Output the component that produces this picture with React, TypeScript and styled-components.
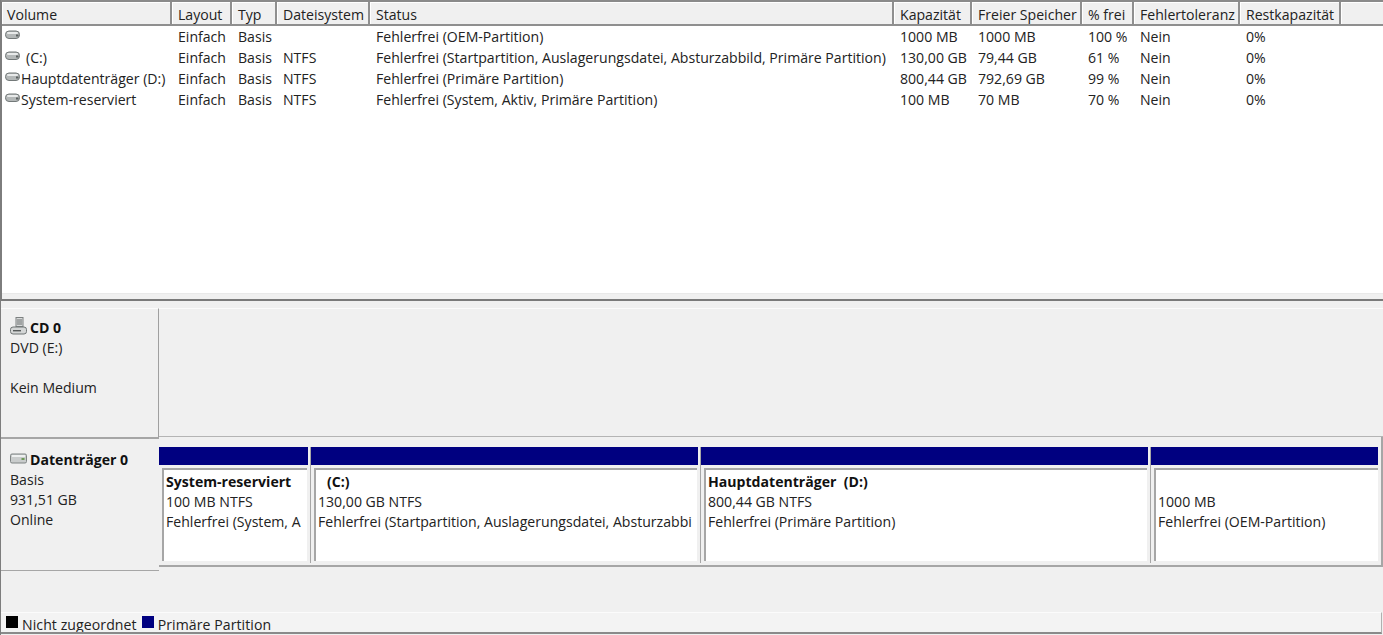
import React from "react";
import styled, { createGlobalStyle } from "styled-components";

const Global = createGlobalStyle`
  html, body { margin: 0; padding: 0; background: #f0f0f0; }
  body { font-family: "Open Sans", "Noto Sans", sans-serif; font-size: 14.1px; color: #222; }
`;

const COLS = "170px 60px 45px 93px 524px 78px 110px 52px 106px 101px 1fr";

const Page = styled.div`
  width: 1383px; height: 635px; overflow: hidden;
  display: flex; flex-direction: column;
  background: #f0f0f0;
  border-left: 1px solid #7d7d7d;
  box-sizing: border-box;
`;
const ListPane = styled.div`
  height: 301px; flex: none; background: #fff;
  margin-left: -1px; border-left: 2px solid #7d7d7d;
  border-top: 2px solid #8a8a8a; border-bottom: 2px solid #7a7a7a;
  box-sizing: border-box;
  display: flex; flex-direction: column;
`;
const HeaderRow = styled.div`
  display: grid; grid-template-columns: ${COLS}; height: 24px; flex: none;
  background: #f0f0f0; border-bottom: 2px solid #8f8f8f; box-sizing: border-box;
`;
const HeaderCell = styled.div<{ $last?: boolean }>`
  padding-left: 6px; line-height: 25px; white-space: nowrap; overflow: hidden;
  border-right: ${(p) => (p.$last ? "none" : "2px solid #8f8f8f")};
  box-shadow: inset 1px 1px 0 #fff;
  &:first-child { padding-left: 5px; }
`;
const Rows = styled.div`
  flex: 1;
`;
const Row = styled.div`
  display: grid; grid-template-columns: ${COLS}; height: 21px; line-height: 21px;
`;
const Cell = styled.div`
  padding-left: 6px; white-space: nowrap;
`;
const VolumeCell = styled(Cell)`
  padding-left: 1px; display: flex; align-items: flex-start;
  svg { margin-top: 4px; flex: none; }
`;
const VolumeName = styled.span<{ $shift: number }>`
  margin-left: ${(p) => p.$shift}px;
`;
const ListFoot = styled.div`
  height: 6px; flex: none; background: #f0f0f0; border-top: 1px solid #e9e9e9; box-sizing: border-box;
`;
const DiskArea = styled.div`
  flex: 1; display: flex; flex-direction: column; padding-top: 7px;
  margin-left: -1px;
`;
const DiskRow = styled.div<{ $h: number }>`
  height: ${(p) => p.$h}px; flex: none; display: flex;
`;
const DiskLabel = styled.div`
  width: 159px; flex: none; box-sizing: border-box; padding: 9px 0 0 10px;
  border-right: 1px solid #a0a0a0; line-height: 20px;
  border-top: 1px solid #fbfbfb;
`;
const DiskLabelSecond = styled(DiskLabel)`
  border-right: none; border-top: 2px solid #a6a6a6; padding-top: 11px;
  border-bottom: 1px solid #a6a6a6; height: 134px;
`;
const LabelTitle = styled.div`
  display: flex; align-items: flex-end; font-weight: 700; color: #111; height: 20px;
`;
const TitleIcon = styled.svg`
  flex: none; margin: 0 3px 6px 0;
`;
const CdTitleIcon = styled(TitleIcon)`
  margin-bottom: 3px;
`;
const EmptyArea = styled.div`
  flex: 1; border-top: 1px solid #fbfbfb; border-bottom: 1px solid #b4b4b4;
`;
const PartitionArea = styled.div`
  flex: none; width: 1224px; display: flex; padding: 10px 3px 2px 0; height: 130px; box-sizing: border-box;
  border-bottom: 2px solid #a6a6a6; border-right: 2px solid #a6a6a6;
`;
const Partition = styled.div<{ $w: number }>`
  width: ${(p) => p.$w}px; flex: none; padding-right: 1px; border-right: 1px solid #a6a6a6;
  display: flex; flex-direction: column;
  &:last-child { border-right: none; padding-right: 0; flex: 1; width: auto; }
`;
const Bar = styled.div`
  height: 18px; background: #000080; flex: none; margin-right: 1px;
  ${Partition}:last-child & { margin-right: 0; }
`;
const PartBox = styled.div`
  margin: 3px 2px 0 3px; height: 93px; box-sizing: border-box;
  background: #fff; border-left: 2px solid #a6a6a6; border-top: 2px solid #a6a6a6;
  padding: 2px 0 0 2px; line-height: 20px; overflow: hidden; white-space: nowrap;
  ${Partition}:last-child & { margin-right: 0; }
`;
const PartTitle = styled.div<{ $indent: number }>`
  font-weight: 700; color: #111; height: 20px; padding-left: ${(p) => p.$indent}px; white-space: pre;
`;
const Spacer = styled.div` flex: 1; `;
const Legend = styled.div`
  height: 19px; flex: none; display: flex; align-items: flex-start; padding-left: 6px;
  background: #f3f3f3; border-top: 1px solid #fbfbfb; border-bottom: 2px solid #8a8a8a;
  border-right: 1px solid #b0b0b0;
  margin: 0 1px 1px 0; line-height: 23px; overflow: hidden;
`;
const Swatch = styled.span<{ $c: string }>`
  width: 12px; height: 12px; background: ${(p) => p.$c}; margin: 3px 4px 0 0; flex: none;
`;
const LegendText = styled.span`
  margin-right: 5px; white-space: nowrap; letter-spacing: 0.07px;
`;

const Drive = () => (
  <svg width="17" height="10" viewBox="0 0 17 10">
    <rect x="2.5" y="1" width="14" height="7.5" rx="3.5" fill="#b4b8b8" stroke="#737979" />
    <rect x="4" y="2" width="11" height="2" rx="1" fill="#e8eaea" />
    <rect x="13" y="4.5" width="2.5" height="2" fill="#5b6060" />
  </svg>
);
const DiskIcon = () => (
  <TitleIcon width="17" height="12" viewBox="0 0 17 12">
    <rect x="0.5" y="2" width="16" height="9" rx="1.5" fill="#c9cccc" stroke="#7f8484" />
    <rect x="2" y="3" width="13" height="2" fill="#eef0f0" />
    <rect x="11.5" y="6" width="3" height="2" fill="#6e9a58" />
  </TitleIcon>
);
const CdIcon = () => (
  <CdTitleIcon width="17" height="18" viewBox="0 0 17 18">
    <rect x="6" y="0.5" width="7" height="9" fill="#d8dada" stroke="#7c8080" />
    <path d="M7 3h5M7 5h5M7 7h5" stroke="#6a6e6e" strokeWidth="1" />
    <rect x="0.5" y="10" width="16" height="7" rx="2.5" fill="#d4d6d6" stroke="#6f7474" />
    <rect x="3" y="13" width="8" height="1.4" fill="#565a5a" />
  </CdTitleIcon>
);

const HEAD = ["Volume","Layout","Typ","Dateisystem","Status","Kapazität","Freier Speicher","% frei","Fehlertoleranz","Restkapazität"];
const DATA = [
  { n: "", s: 0, fs: "", st: "Fehlerfrei (OEM-Partition)", k: "1000 MB", f: "1000 MB", p: "100 %" },
  { n: "(C:)", s: 6, fs: "NTFS", st: "Fehlerfrei (Startpartition, Auslagerungsdatei, Absturzabbild, Primäre Partition)", k: "130,00 GB", f: "79,44 GB", p: "61 %" },
  { n: "Hauptdatenträger (D:)", s: 1, fs: "NTFS", st: "Fehlerfrei (Primäre Partition)", k: "800,44 GB", f: "792,69 GB", p: "99 %" },
  { n: "System-reserviert", s: 1, fs: "NTFS", st: "Fehlerfrei (System, Aktiv, Primäre Partition)", k: "100 MB", f: "70 MB", p: "70 %" },
];
const PARTS = [
  { w: 150, i: 0, t: "System-reserviert", a: "100 MB NTFS", b: "Fehlerfrei (System, A" },
  { w: 388, i: 9, t: "(C:)", a: "130,00 GB NTFS", b: "Fehlerfrei (Startpartition, Auslagerungsdatei, Absturzabbi" },
  { w: 448, i: 0, t: "Hauptdatenträger  (D:)", a: "800,44 GB NTFS", b: "Fehlerfrei (Primäre Partition)" },
  { w: 228, i: 0, t: "", a: "1000 MB", b: "Fehlerfrei (OEM-Partition)" },
];

export default function App() {
  return (
    <Page>
      <Global />
      <ListPane>
        <HeaderRow>
          {HEAD.map((h) => <HeaderCell key={h}>{h}</HeaderCell>)}
          <HeaderCell $last />
        </HeaderRow>
        <Rows>
          {DATA.map((d) => (
            <Row key={d.st}>
              <VolumeCell><Drive /><VolumeName $shift={d.s}>{d.n}</VolumeName></VolumeCell>
              <Cell>Einfach</Cell>
              <Cell>Basis</Cell>
              <Cell>{d.fs}</Cell>
              <Cell>{d.st}</Cell>
              <Cell>{d.k}</Cell>
              <Cell>{d.f}</Cell>
              <Cell>{d.p}</Cell>
              <Cell>Nein</Cell>
              <Cell>0%</Cell>
            </Row>
          ))}
        </Rows>
        <ListFoot />
      </ListPane>
      <DiskArea>
        <DiskRow $h={129}>
          <DiskLabel>
            <LabelTitle><CdIcon />CD 0</LabelTitle>
            <div>DVD (E:)</div>
            <div>&nbsp;</div>
            <div>Kein Medium</div>
          </DiskLabel>
          <EmptyArea />
        </DiskRow>
        <DiskRow $h={134}>
          <DiskLabelSecond>
            <LabelTitle><DiskIcon />Datenträger 0</LabelTitle>
            <div>Basis</div>
            <div>931,51 GB</div>
            <div>Online</div>
          </DiskLabelSecond>
          <PartitionArea>
            {PARTS.map((p) => (
              <Partition key={p.a} $w={p.w}>
                <Bar />
                <PartBox>
                  <PartTitle $indent={p.i}>{p.t}</PartTitle>
                  <div>{p.a}</div>
                  <div>{p.b}</div>
                </PartBox>
              </Partition>
            ))}
          </PartitionArea>
        </DiskRow>
        <Spacer />
        <Legend>
          <Swatch $c="#000" /><LegendText>Nicht zugeordnet</LegendText>
          <Swatch $c="#000080" /><LegendText>Primäre Partition</LegendText>
        </Legend>
      </DiskArea>
    </Page>
  );
}
